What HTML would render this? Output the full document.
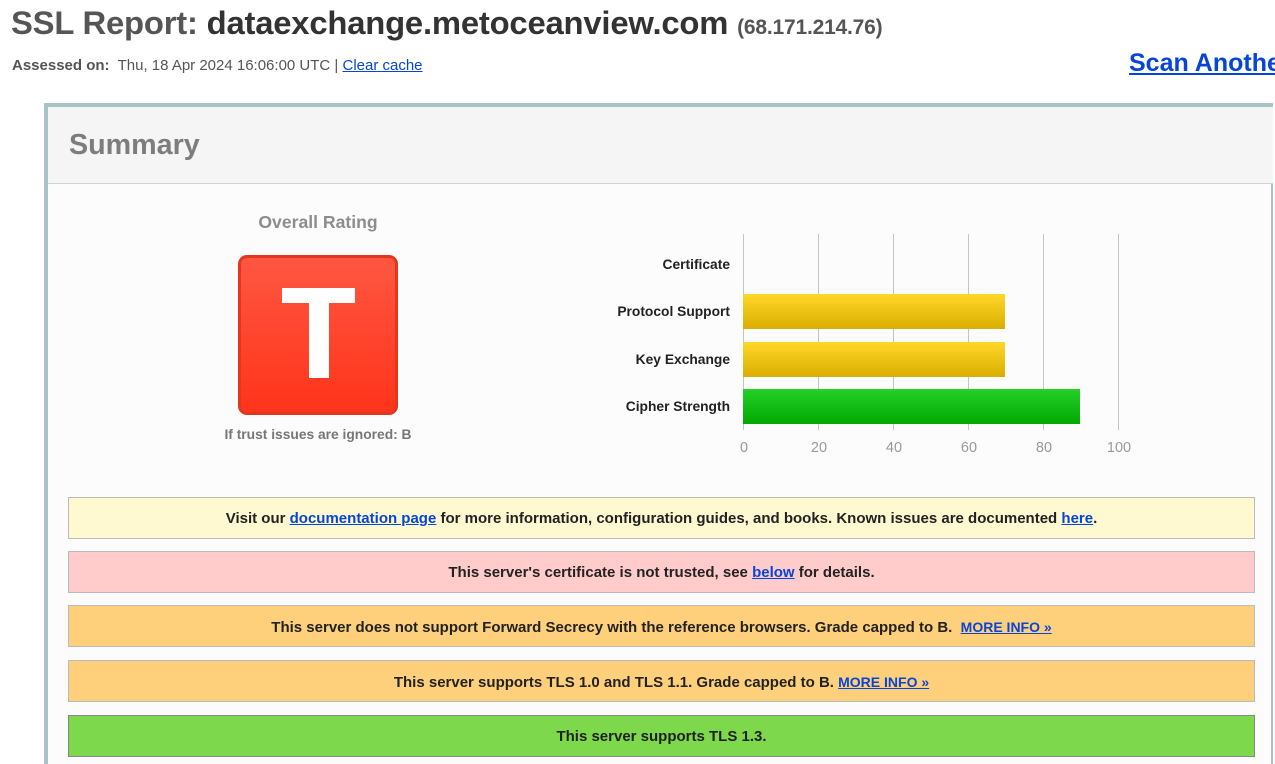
<!DOCTYPE html>
<html><head><meta charset="utf-8"><style>
*{margin:0;padding:0;box-sizing:border-box}
html,body{width:1275px;height:764px;overflow:hidden}
body{background:#fff;font-family:"Liberation Sans",Arial,sans-serif;position:relative}
.abs{position:absolute}
h1{position:absolute;left:11px;top:4px;font-size:32.8px;font-weight:bold;color:#555;white-space:nowrap;letter-spacing:-0.2px}
h1 b{color:#333}
h1 small{font-size:21px;color:#555}
.assess{left:12px;top:57px;font-size:15px;color:#555;white-space:nowrap}
a{color:#0645d8;text-decoration:underline}
.scan{left:1129px;top:49px;font-size:25px;font-weight:bold;white-space:nowrap}
.panel{left:44px;top:103px;width:1229px;height:661px;border:4px solid #a7c4c7;border-right:2px solid #a7c4c7;border-bottom:0;background:#fcfcfc}
.head{left:48px;top:107px;width:1225px;height:77px;background:#f5f5f5;border-bottom:1px solid #c8d6d8}
.head span{position:absolute;left:21px;top:22px;font-size:28.7px;font-weight:bold;color:#7d7d7d}
.alert{position:absolute;left:68px;width:1187px;height:42px;border:1px solid #bbb;text-align:center;font-size:15px;font-weight:bold;color:#222;line-height:42px;white-space:nowrap}
.grid{position:absolute;top:234px;width:1px;height:196px;background:#c4c4c4}
.lbl{position:absolute;right:545px;font-size:13.8px;font-weight:bold;color:#222;white-space:nowrap}
.ax{position:absolute;top:440px;font-size:14.5px;color:#999;width:40px;text-align:center}
.bar{position:absolute;left:743px}
.y{background:linear-gradient(#ffd72a,#d9ae00)}
.g{background:linear-gradient(#27cf2a,#00a800)}
</style></head><body>
<h1>SSL Report: <b>dataexchange.metoceanview.com</b> <small>(68.171.214.76)</small></h1>
<div class="abs assess"><b>Assessed on:</b>&nbsp; Thu, 18 Apr 2024 16:06:00 UTC | <a>Clear cache</a></div>
<div class="abs scan"><a>Scan Another »</a></div>
<div class="abs panel"></div>
<div class="abs head"><span>Summary</span></div>
<div class="abs" style="left:208px;top:212px;width:220px;text-align:center;font-size:17.6px;font-weight:bold;color:#8d8d8d">Overall Rating</div>
<div class="abs" style="left:238px;top:255px;width:160px;height:160px;border-radius:9px;border:3px solid #e4361e;background:linear-gradient(#ff5641,#ff341b)"></div>
<div class="abs" style="left:282px;top:288px;width:73px;height:15px;background:#fff"></div>
<div class="abs" style="left:309px;top:288px;width:20px;height:90px;background:#fff"></div>
<div class="abs" style="left:190px;top:427px;width:256px;text-align:center;font-size:13.8px;font-weight:bold;color:#777">If trust issues are ignored: B</div>
<div class="grid" style="left:743px"></div><div class="grid" style="left:818px"></div><div class="grid" style="left:893px"></div><div class="grid" style="left:968px"></div><div class="grid" style="left:1043px"></div><div class="grid" style="left:1118px"></div>
<div class="bar y" style="top:294px;width:262px;height:35px"></div>
<div class="bar y" style="top:342px;width:262px;height:35px"></div>
<div class="bar g" style="top:389px;width:337px;height:35px"></div>
<div class="lbl" style="top:257px">Certificate</div>
<div class="lbl" style="top:304px">Protocol Support</div>
<div class="lbl" style="top:352px">Key Exchange</div>
<div class="lbl" style="top:399px">Cipher Strength</div>
<div class="ax" style="left:724px">0</div><div class="ax" style="left:799px">20</div><div class="ax" style="left:874px">40</div><div class="ax" style="left:949px">60</div><div class="ax" style="left:1024px">80</div><div class="ax" style="left:1099px">100</div>
<div class="alert" style="top:497px;background:#fff9d2">Visit our <a>documentation page</a> for more information, configuration guides, and books. Known issues are documented <a>here</a>.</div>
<div class="alert" style="top:551px;background:#ffcccb">This server's certificate is not trusted, see <a>below</a> for details.</div>
<div class="alert" style="top:605px;background:#ffd07b">This server does not support Forward Secrecy with the reference browsers. Grade capped to B. &nbsp;<a style="font-size:14px">MORE INFO »</a></div>
<div class="alert" style="top:660px;background:#ffd07b">This server supports TLS 1.0 and TLS 1.1. Grade capped to B. <a style="font-size:14px">MORE INFO »</a></div>
<div class="alert" style="top:715px;background:#7dd84c;border-color:#888">This server supports TLS 1.3.</div>
</body></html>
